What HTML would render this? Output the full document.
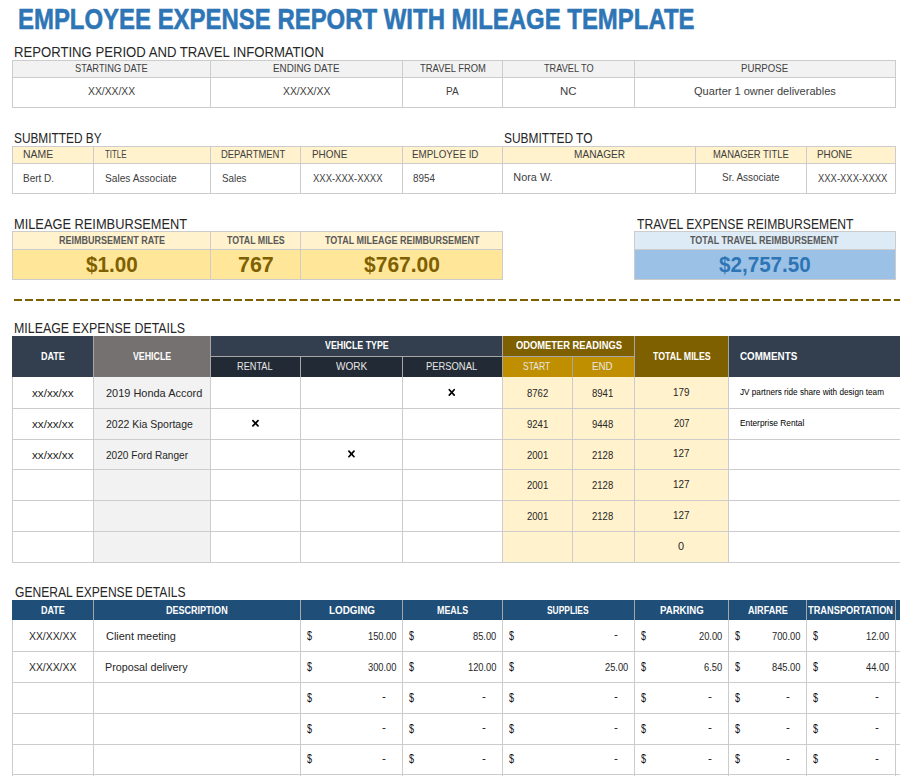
<!DOCTYPE html>
<html><head><meta charset="utf-8"><style>
html,body{margin:0;padding:0;background:#fff;width:900px;height:776px;overflow:hidden;position:relative;font-family:"Liberation Sans", sans-serif}
i{position:absolute;display:block}
b{position:absolute;white-space:nowrap;line-height:1;transform-origin:0 0;font-style:normal}
</style></head><body>
<i style="left:12px;top:60px;width:884px;height:17px;background:#f2f2f2"></i>
<i style="left:12px;top:60px;width:884px;height:1px;background:#cccccc"></i>
<i style="left:12px;top:77px;width:884px;height:1px;background:#cccccc"></i>
<i style="left:12px;top:107px;width:884px;height:1px;background:#cccccc"></i>
<i style="left:12px;top:60px;width:1px;height:48px;background:#cccccc"></i>
<i style="left:210px;top:60px;width:1px;height:48px;background:#cccccc"></i>
<i style="left:402px;top:60px;width:1px;height:48px;background:#cccccc"></i>
<i style="left:502px;top:60px;width:1px;height:48px;background:#cccccc"></i>
<i style="left:634px;top:60px;width:1px;height:48px;background:#cccccc"></i>
<i style="left:895px;top:60px;width:1px;height:48px;background:#cccccc"></i>
<i style="left:12px;top:146px;width:884px;height:17px;background:#fff2cc"></i>
<i style="left:12px;top:146px;width:884px;height:1px;background:#cccccc"></i>
<i style="left:12px;top:163px;width:884px;height:1px;background:#cccccc"></i>
<i style="left:12px;top:193px;width:884px;height:1px;background:#cccccc"></i>
<i style="left:12px;top:146px;width:1px;height:48px;background:#cccccc"></i>
<i style="left:93px;top:146px;width:1px;height:48px;background:#cccccc"></i>
<i style="left:210px;top:146px;width:1px;height:48px;background:#cccccc"></i>
<i style="left:300px;top:146px;width:1px;height:48px;background:#cccccc"></i>
<i style="left:402px;top:146px;width:1px;height:48px;background:#cccccc"></i>
<i style="left:502px;top:146px;width:1px;height:48px;background:#cccccc"></i>
<i style="left:695px;top:146px;width:1px;height:48px;background:#cccccc"></i>
<i style="left:806px;top:146px;width:1px;height:48px;background:#cccccc"></i>
<i style="left:895px;top:146px;width:1px;height:48px;background:#cccccc"></i>
<i style="left:12px;top:231px;width:490px;height:18px;background:#fff2cc"></i>
<i style="left:12px;top:249px;width:490px;height:30px;background:#ffe699"></i>
<i style="left:12px;top:231px;width:491px;height:1px;background:#cccccc"></i>
<i style="left:12px;top:249px;width:491px;height:1px;background:#cccccc"></i>
<i style="left:12px;top:279px;width:491px;height:1px;background:#cccccc"></i>
<i style="left:12px;top:231px;width:1px;height:49px;background:#cccccc"></i>
<i style="left:210px;top:231px;width:1px;height:49px;background:#cccccc"></i>
<i style="left:300px;top:231px;width:1px;height:49px;background:#cccccc"></i>
<i style="left:502px;top:231px;width:1px;height:49px;background:#cccccc"></i>
<i style="left:634px;top:231px;width:261px;height:18px;background:#ddebf7"></i>
<i style="left:634px;top:249px;width:261px;height:30px;background:#9bc2e6"></i>
<i style="left:634px;top:231px;width:262px;height:1px;background:#cccccc"></i>
<i style="left:634px;top:249px;width:262px;height:1px;background:#cccccc"></i>
<i style="left:634px;top:279px;width:262px;height:1px;background:#cccccc"></i>
<i style="left:634px;top:231px;width:1px;height:49px;background:#cccccc"></i>
<i style="left:895px;top:231px;width:1px;height:49px;background:#cccccc"></i>
<i style="left:12px;top:336px;width:81px;height:41px;background:#333f4f"></i>
<i style="left:93px;top:336px;width:117px;height:41px;background:#757171"></i>
<i style="left:210px;top:336px;width:292px;height:21px;background:#333f4f"></i>
<i style="left:210px;top:357px;width:292px;height:20px;background:#222b35"></i>
<i style="left:502px;top:336px;width:132px;height:21px;background:#7f6000"></i>
<i style="left:502px;top:357px;width:132px;height:20px;background:#bf8f00"></i>
<i style="left:634px;top:336px;width:94px;height:41px;background:#7f6000"></i>
<i style="left:728px;top:336px;width:172px;height:41px;background:#333f4f"></i>
<i style="left:93px;top:377px;width:117px;height:185px;background:#f2f2f2"></i>
<i style="left:502px;top:377px;width:226px;height:185px;background:#fff2cc"></i>
<i style="left:210px;top:356px;width:424px;height:1px;background:#a6a6a6"></i>
<i style="left:93px;top:336px;width:1px;height:41px;background:#a6a6a6"></i>
<i style="left:210px;top:336px;width:1px;height:41px;background:#a6a6a6"></i>
<i style="left:502px;top:336px;width:1px;height:41px;background:#a6a6a6"></i>
<i style="left:634px;top:336px;width:1px;height:41px;background:#a6a6a6"></i>
<i style="left:728px;top:336px;width:1px;height:41px;background:#a6a6a6"></i>
<i style="left:300px;top:357px;width:1px;height:20px;background:#a6a6a6"></i>
<i style="left:402px;top:357px;width:1px;height:20px;background:#a6a6a6"></i>
<i style="left:572px;top:357px;width:1px;height:20px;background:#a6a6a6"></i>
<i style="left:12px;top:408px;width:888px;height:1px;background:#cccccc"></i>
<i style="left:12px;top:439px;width:888px;height:1px;background:#cccccc"></i>
<i style="left:12px;top:469px;width:888px;height:1px;background:#cccccc"></i>
<i style="left:12px;top:500px;width:888px;height:1px;background:#cccccc"></i>
<i style="left:12px;top:531px;width:888px;height:1px;background:#cccccc"></i>
<i style="left:12px;top:562px;width:888px;height:1px;background:#cccccc"></i>
<i style="left:12px;top:377px;width:1px;height:186px;background:#cccccc"></i>
<i style="left:93px;top:377px;width:1px;height:186px;background:#cccccc"></i>
<i style="left:210px;top:377px;width:1px;height:186px;background:#cccccc"></i>
<i style="left:300px;top:377px;width:1px;height:186px;background:#cccccc"></i>
<i style="left:402px;top:377px;width:1px;height:186px;background:#cccccc"></i>
<i style="left:502px;top:377px;width:1px;height:186px;background:#cccccc"></i>
<i style="left:572px;top:377px;width:1px;height:186px;background:#cccccc"></i>
<i style="left:634px;top:377px;width:1px;height:186px;background:#cccccc"></i>
<i style="left:728px;top:377px;width:1px;height:186px;background:#cccccc"></i>
<i style="left:12px;top:600px;width:888px;height:20px;background:#1f4e78"></i>
<i style="left:93px;top:600px;width:1px;height:20px;background:#a6a6a6"></i>
<i style="left:300px;top:600px;width:1px;height:20px;background:#a6a6a6"></i>
<i style="left:402px;top:600px;width:1px;height:20px;background:#a6a6a6"></i>
<i style="left:502px;top:600px;width:1px;height:20px;background:#a6a6a6"></i>
<i style="left:634px;top:600px;width:1px;height:20px;background:#a6a6a6"></i>
<i style="left:728px;top:600px;width:1px;height:20px;background:#a6a6a6"></i>
<i style="left:806px;top:600px;width:1px;height:20px;background:#a6a6a6"></i>
<i style="left:895px;top:600px;width:1px;height:20px;background:#a6a6a6"></i>
<i style="left:12px;top:651px;width:888px;height:1px;background:#cccccc"></i>
<i style="left:12px;top:682px;width:888px;height:1px;background:#cccccc"></i>
<i style="left:12px;top:713px;width:888px;height:1px;background:#cccccc"></i>
<i style="left:12px;top:744px;width:888px;height:1px;background:#cccccc"></i>
<i style="left:12px;top:774px;width:888px;height:1px;background:#cccccc"></i>
<i style="left:12px;top:620px;width:1px;height:156px;background:#cccccc"></i>
<i style="left:93px;top:620px;width:1px;height:156px;background:#cccccc"></i>
<i style="left:300px;top:620px;width:1px;height:156px;background:#cccccc"></i>
<i style="left:402px;top:620px;width:1px;height:156px;background:#cccccc"></i>
<i style="left:502px;top:620px;width:1px;height:156px;background:#cccccc"></i>
<i style="left:634px;top:620px;width:1px;height:156px;background:#cccccc"></i>
<i style="left:728px;top:620px;width:1px;height:156px;background:#cccccc"></i>
<i style="left:806px;top:620px;width:1px;height:156px;background:#cccccc"></i>
<i style="left:895px;top:620px;width:1px;height:156px;background:#cccccc"></i>
<b style="left:18.08px;top:4px;font-size:29.50px;font-weight:700;color:#2e75b6;transform:scaleX(0.8114);-webkit-text-stroke:0.6px #2e75b6">EMPLOYEE EXPENSE REPORT WITH MILEAGE TEMPLATE</b>
<b style="left:14.10px;top:45px;font-size:14.65px;font-weight:400;color:#262626;transform:scaleX(0.8965);">REPORTING PERIOD AND TRAVEL INFORMATION</b>
<b style="left:75.00px;top:63px;font-size:10.90px;font-weight:400;color:#404040;transform:scaleX(0.8529);">STARTING DATE</b>
<b style="left:273.10px;top:63px;font-size:10.90px;font-weight:400;color:#404040;transform:scaleX(0.9028);">ENDING DATE</b>
<b style="left:420.00px;top:63px;font-size:10.90px;font-weight:400;color:#404040;transform:scaleX(0.8645);">TRAVEL FROM</b>
<b style="left:543.60px;top:63px;font-size:10.90px;font-weight:400;color:#404040;transform:scaleX(0.8424);">TRAVEL TO</b>
<b style="left:741.12px;top:63px;font-size:10.90px;font-weight:400;color:#404040;transform:scaleX(0.8846);">PURPOSE</b>
<b style="left:88.00px;top:86px;font-size:10.90px;font-weight:400;color:#404040;transform:scaleX(0.9490);">XX/XX/XX</b>
<b style="left:283.30px;top:86px;font-size:10.90px;font-weight:400;color:#404040;transform:scaleX(0.9531);">XX/XX/XX</b>
<b style="left:445.78px;top:86px;font-size:10.90px;font-weight:400;color:#404040;transform:scaleX(0.9231);">PA</b>
<b style="left:559.85px;top:86px;font-size:10.90px;font-weight:400;color:#404040;transform:scaleX(1.0500);">NC</b>
<b style="left:694.00px;top:86px;font-size:10.90px;font-weight:400;color:#404040;transform:scaleX(1.0143);">Quarter 1 owner deliverables</b>
<b style="left:13.59px;top:131px;font-size:14.65px;font-weight:400;color:#262626;transform:scaleX(0.8093);">SUBMITTED BY</b>
<b style="left:504.18px;top:131px;font-size:14.65px;font-weight:400;color:#262626;transform:scaleX(0.8159);">SUBMITTED TO</b>
<b style="left:23.04px;top:149px;font-size:10.90px;font-weight:400;color:#404040;transform:scaleX(0.9567);">NAME</b>
<b style="left:105.00px;top:149px;font-size:10.90px;font-weight:400;color:#404040;transform:scaleX(0.7233);">TITLE</b>
<b style="left:220.83px;top:149px;font-size:10.90px;font-weight:400;color:#404040;transform:scaleX(0.8671);">DEPARTMENT</b>
<b style="left:311.79px;top:149px;font-size:10.90px;font-weight:400;color:#404040;transform:scaleX(0.9105);">PHONE</b>
<b style="left:412.40px;top:149px;font-size:10.90px;font-weight:400;color:#404040;transform:scaleX(0.9000);">EMPLOYEE ID</b>
<b style="left:574.07px;top:149px;font-size:10.90px;font-weight:400;color:#404040;transform:scaleX(0.9259);">MANAGER</b>
<b style="left:713.43px;top:149px;font-size:10.90px;font-weight:400;color:#404040;transform:scaleX(0.8651);">MANAGER TITLE</b>
<b style="left:817.39px;top:149px;font-size:10.90px;font-weight:400;color:#404040;transform:scaleX(0.9053);">PHONE</b>
<b style="left:23.08px;top:173px;font-size:10.90px;font-weight:400;color:#404040;transform:scaleX(0.9156);">Bert D.</b>
<b style="left:105.00px;top:173px;font-size:10.90px;font-weight:400;color:#404040;transform:scaleX(0.9312);">Sales Associate</b>
<b style="left:221.70px;top:173px;font-size:10.90px;font-weight:400;color:#404040;transform:scaleX(0.9000);">Sales</b>
<b style="left:312.70px;top:173px;font-size:10.90px;font-weight:400;color:#404040;transform:scaleX(0.8700);">XXX-XXX-XXXX</b>
<b style="left:413.30px;top:173px;font-size:10.90px;font-weight:400;color:#404040;transform:scaleX(0.9042);">8954</b>
<b style="left:513.30px;top:172px;font-size:10.90px;font-weight:400;color:#404040;transform:scaleX(1.0000);">Nora W.</b>
<b style="left:722.30px;top:172px;font-size:10.90px;font-weight:400;color:#404040;transform:scaleX(0.9159);">Sr. Associate</b>
<b style="left:818.30px;top:173px;font-size:10.90px;font-weight:400;color:#404040;transform:scaleX(0.8675);">XXX-XXX-XXXX</b>
<b style="left:14.12px;top:217px;font-size:14.65px;font-weight:400;color:#262626;transform:scaleX(0.8756);">MILEAGE REIMBURSEMENT</b>
<b style="left:636.70px;top:217px;font-size:14.65px;font-weight:400;color:#262626;transform:scaleX(0.8287);">TRAVEL EXPENSE REIMBURSEMENT</b>
<b style="left:59.00px;top:235px;font-size:10.90px;font-weight:700;color:#595959;transform:scaleX(0.8281);">REIMBURSEMENT RATE</b>
<b style="left:227.30px;top:235px;font-size:10.90px;font-weight:700;color:#595959;transform:scaleX(0.8085);">TOTAL MILES</b>
<b style="left:325.00px;top:235px;font-size:10.90px;font-weight:700;color:#595959;transform:scaleX(0.8267);">TOTAL MILEAGE REIMBURSEMENT</b>
<b style="left:690.40px;top:235px;font-size:10.90px;font-weight:700;color:#595959;transform:scaleX(0.8256);">TOTAL TRAVEL REIMBURSEMENT</b>
<b style="left:86.00px;top:254px;font-size:22.05px;font-weight:700;color:#7f6000;transform:scaleX(0.9364);">$1.00</b>
<b style="left:237.73px;top:254px;font-size:22.05px;font-weight:700;color:#7f6000;transform:scaleX(0.9714);">767</b>
<b style="left:364.00px;top:254px;font-size:22.05px;font-weight:700;color:#7f6000;transform:scaleX(0.9532);">$767.00</b>
<b style="left:719.30px;top:254px;font-size:22.05px;font-weight:700;color:#2e75b6;transform:scaleX(0.9357);">$2,757.50</b>
<b style="left:14.15px;top:321px;font-size:14.65px;font-weight:400;color:#262626;transform:scaleX(0.8458);">MILEAGE EXPENSE DETAILS</b>
<b style="left:41.00px;top:351px;font-size:10.90px;font-weight:700;color:#ffffff;transform:scaleX(0.8276);">DATE</b>
<b style="left:132.70px;top:351px;font-size:10.90px;font-weight:700;color:#ffffff;transform:scaleX(0.8085);">VEHICLE</b>
<b style="left:325.00px;top:340px;font-size:10.90px;font-weight:700;color:#ffffff;transform:scaleX(0.8101);">VEHICLE TYPE</b>
<b style="left:516.00px;top:340px;font-size:10.90px;font-weight:700;color:#ffffff;transform:scaleX(0.8585);">ODOMETER READINGS</b>
<b style="left:652.60px;top:351px;font-size:10.90px;font-weight:700;color:#ffffff;transform:scaleX(0.8085);">TOTAL MILES</b>
<b style="left:740.20px;top:351px;font-size:10.90px;font-weight:700;color:#ffffff;transform:scaleX(0.9000);">COMMENTS</b>
<b style="left:236.86px;top:361px;font-size:10.90px;font-weight:400;color:#e7e6e6;transform:scaleX(0.8439);">RENTAL</b>
<b style="left:336.00px;top:361px;font-size:10.90px;font-weight:400;color:#e7e6e6;transform:scaleX(0.9206);">WORK</b>
<b style="left:426.44px;top:361px;font-size:10.90px;font-weight:400;color:#e7e6e6;transform:scaleX(0.8621);">PERSONAL</b>
<b style="left:523.30px;top:361px;font-size:10.90px;font-weight:400;color:#e7e6e6;transform:scaleX(0.7829);">START</b>
<b style="left:592.30px;top:361px;font-size:10.90px;font-weight:400;color:#e7e6e6;transform:scaleX(0.8955);">END</b>
<b style="left:31.70px;top:388px;font-size:11.80px;font-weight:400;color:#262626;transform:scaleX(0.9905);">xx/xx/xx</b>
<b style="left:105.70px;top:388px;font-size:10.90px;font-weight:400;color:#262626;transform:scaleX(1.0063);">2019 Honda Accord</b>
<b style="left:526.70px;top:388px;font-size:10.90px;font-weight:400;color:#262626;transform:scaleX(0.8750);">8762</b>
<b style="left:592.20px;top:388px;font-size:10.90px;font-weight:400;color:#262626;transform:scaleX(0.8750);">8941</b>
<b style="left:672.89px;top:387px;font-size:10.90px;font-weight:400;color:#262626;transform:scaleX(0.9059);">179</b>
<b style="left:31.70px;top:419px;font-size:11.80px;font-weight:400;color:#262626;transform:scaleX(0.9905);">xx/xx/xx</b>
<b style="left:105.70px;top:419px;font-size:10.90px;font-weight:400;color:#262626;transform:scaleX(0.9622);">2022 Kia Sportage</b>
<b style="left:526.70px;top:419px;font-size:10.90px;font-weight:400;color:#262626;transform:scaleX(0.8750);">9241</b>
<b style="left:592.20px;top:419px;font-size:10.90px;font-weight:400;color:#262626;transform:scaleX(0.8750);">9448</b>
<b style="left:673.80px;top:418px;font-size:10.90px;font-weight:400;color:#262626;transform:scaleX(0.8556);">207</b>
<b style="left:31.70px;top:450px;font-size:11.80px;font-weight:400;color:#262626;transform:scaleX(0.9905);">xx/xx/xx</b>
<b style="left:105.70px;top:450px;font-size:10.90px;font-weight:400;color:#262626;transform:scaleX(0.9281);">2020 Ford Ranger</b>
<b style="left:526.70px;top:450px;font-size:10.90px;font-weight:400;color:#262626;transform:scaleX(0.8750);">2001</b>
<b style="left:592.20px;top:450px;font-size:10.90px;font-weight:400;color:#262626;transform:scaleX(0.8750);">2128</b>
<b style="left:672.89px;top:448px;font-size:10.90px;font-weight:400;color:#262626;transform:scaleX(0.9059);">127</b>
<b style="left:526.70px;top:480px;font-size:10.90px;font-weight:400;color:#262626;transform:scaleX(0.8750);">2001</b>
<b style="left:592.20px;top:480px;font-size:10.90px;font-weight:400;color:#262626;transform:scaleX(0.8750);">2128</b>
<b style="left:672.89px;top:479px;font-size:10.90px;font-weight:400;color:#262626;transform:scaleX(0.9059);">127</b>
<b style="left:526.70px;top:511px;font-size:10.90px;font-weight:400;color:#262626;transform:scaleX(0.8750);">2001</b>
<b style="left:592.20px;top:511px;font-size:10.90px;font-weight:400;color:#262626;transform:scaleX(0.8750);">2128</b>
<b style="left:672.89px;top:510px;font-size:10.90px;font-weight:400;color:#262626;transform:scaleX(0.9059);">127</b>
<b style="left:678.00px;top:541px;font-size:10.90px;font-weight:400;color:#262626;transform:scaleX(1.0000);">0</b>
<b style="left:740.20px;top:387px;font-size:9.60px;font-weight:400;color:#000;transform:scaleX(0.8515);">JV partners ride share with design team</b>
<b style="left:740.20px;top:418px;font-size:9.60px;font-weight:400;color:#000;transform:scaleX(0.8676);">Enterprise Rental</b>
<b style="left:15.00px;top:585px;font-size:14.65px;font-weight:400;color:#262626;transform:scaleX(0.8252);">GENERAL EXPENSE DETAILS</b>
<b style="left:41.00px;top:605px;font-size:10.90px;font-weight:700;color:#ffffff;transform:scaleX(0.8276);">DATE</b>
<b style="left:166.00px;top:605px;font-size:10.90px;font-weight:700;color:#ffffff;transform:scaleX(0.8284);">DESCRIPTION</b>
<b style="left:329.00px;top:605px;font-size:10.90px;font-weight:700;color:#ffffff;transform:scaleX(0.9060);">LODGING</b>
<b style="left:437.30px;top:605px;font-size:10.90px;font-weight:700;color:#ffffff;transform:scaleX(0.8158);">MEALS</b>
<b style="left:547.30px;top:605px;font-size:10.90px;font-weight:700;color:#ffffff;transform:scaleX(0.7722);">SUPPLIES</b>
<b style="left:660.00px;top:605px;font-size:10.90px;font-weight:700;color:#ffffff;transform:scaleX(0.8837);">PARKING</b>
<b style="left:748.30px;top:605px;font-size:10.90px;font-weight:700;color:#ffffff;transform:scaleX(0.8333);">AIRFARE</b>
<b style="left:808.30px;top:605px;font-size:10.90px;font-weight:700;color:#ffffff;transform:scaleX(0.8500);">TRANSPORTATION</b>
<b style="left:29.30px;top:631px;font-size:10.90px;font-weight:400;color:#262626;transform:scaleX(0.9531);">XX/XX/XX</b>
<b style="left:105.70px;top:631px;font-size:10.90px;font-weight:400;color:#262626;transform:scaleX(1.0043);">Client meeting</b>
<b style="left:306.80px;top:630px;font-size:12.20px;font-weight:400;color:#111;transform:scaleX(0.7429);">$</b>
<b style="left:367.78px;top:631px;font-size:10.90px;font-weight:400;color:#262626;transform:scaleX(0.8550);">150.00</b>
<b style="left:408.80px;top:630px;font-size:12.20px;font-weight:400;color:#111;transform:scaleX(0.7429);">$</b>
<b style="left:472.92px;top:631px;font-size:10.90px;font-weight:400;color:#262626;transform:scaleX(0.8550);">85.00</b>
<b style="left:508.80px;top:630px;font-size:12.20px;font-weight:400;color:#111;transform:scaleX(0.7429);">$</b>
<b style="left:613.50px;top:629px;font-size:10.90px;font-weight:400;color:#111;transform:scaleX(1.0750);">-</b>
<b style="left:640.80px;top:630px;font-size:12.20px;font-weight:400;color:#111;transform:scaleX(0.7429);">$</b>
<b style="left:698.91px;top:631px;font-size:10.90px;font-weight:400;color:#262626;transform:scaleX(0.8550);">20.00</b>
<b style="left:734.80px;top:630px;font-size:12.20px;font-weight:400;color:#111;transform:scaleX(0.7429);">$</b>
<b style="left:771.78px;top:631px;font-size:10.90px;font-weight:400;color:#262626;transform:scaleX(0.8550);">700.00</b>
<b style="left:812.80px;top:630px;font-size:12.20px;font-weight:400;color:#111;transform:scaleX(0.7429);">$</b>
<b style="left:865.91px;top:631px;font-size:10.90px;font-weight:400;color:#262626;transform:scaleX(0.8550);">12.00</b>
<b style="left:29.30px;top:662px;font-size:10.90px;font-weight:400;color:#262626;transform:scaleX(0.9531);">XX/XX/XX</b>
<b style="left:104.71px;top:662px;font-size:10.90px;font-weight:400;color:#262626;transform:scaleX(0.9880);">Proposal delivery</b>
<b style="left:306.80px;top:661px;font-size:12.20px;font-weight:400;color:#111;transform:scaleX(0.7429);">$</b>
<b style="left:367.78px;top:662px;font-size:10.90px;font-weight:400;color:#262626;transform:scaleX(0.8550);">300.00</b>
<b style="left:408.80px;top:661px;font-size:12.20px;font-weight:400;color:#111;transform:scaleX(0.7429);">$</b>
<b style="left:467.78px;top:662px;font-size:10.90px;font-weight:400;color:#262626;transform:scaleX(0.8550);">120.00</b>
<b style="left:508.80px;top:661px;font-size:12.20px;font-weight:400;color:#111;transform:scaleX(0.7429);">$</b>
<b style="left:604.91px;top:662px;font-size:10.90px;font-weight:400;color:#262626;transform:scaleX(0.8550);">25.00</b>
<b style="left:640.80px;top:661px;font-size:12.20px;font-weight:400;color:#111;transform:scaleX(0.7429);">$</b>
<b style="left:704.04px;top:662px;font-size:10.90px;font-weight:400;color:#262626;transform:scaleX(0.8550);">6.50</b>
<b style="left:734.80px;top:661px;font-size:12.20px;font-weight:400;color:#111;transform:scaleX(0.7429);">$</b>
<b style="left:771.78px;top:662px;font-size:10.90px;font-weight:400;color:#262626;transform:scaleX(0.8550);">845.00</b>
<b style="left:812.80px;top:661px;font-size:12.20px;font-weight:400;color:#111;transform:scaleX(0.7429);">$</b>
<b style="left:865.91px;top:662px;font-size:10.90px;font-weight:400;color:#262626;transform:scaleX(0.8550);">44.00</b>
<b style="left:306.80px;top:692px;font-size:12.20px;font-weight:400;color:#111;transform:scaleX(0.7429);">$</b>
<b style="left:381.50px;top:691px;font-size:10.90px;font-weight:400;color:#111;transform:scaleX(1.0750);">-</b>
<b style="left:408.80px;top:692px;font-size:12.20px;font-weight:400;color:#111;transform:scaleX(0.7429);">$</b>
<b style="left:481.50px;top:691px;font-size:10.90px;font-weight:400;color:#111;transform:scaleX(1.0750);">-</b>
<b style="left:508.80px;top:692px;font-size:12.20px;font-weight:400;color:#111;transform:scaleX(0.7429);">$</b>
<b style="left:613.50px;top:691px;font-size:10.90px;font-weight:400;color:#111;transform:scaleX(1.0750);">-</b>
<b style="left:640.80px;top:692px;font-size:12.20px;font-weight:400;color:#111;transform:scaleX(0.7429);">$</b>
<b style="left:707.50px;top:691px;font-size:10.90px;font-weight:400;color:#111;transform:scaleX(1.0750);">-</b>
<b style="left:734.80px;top:692px;font-size:12.20px;font-weight:400;color:#111;transform:scaleX(0.7429);">$</b>
<b style="left:785.50px;top:691px;font-size:10.90px;font-weight:400;color:#111;transform:scaleX(1.0750);">-</b>
<b style="left:812.80px;top:692px;font-size:12.20px;font-weight:400;color:#111;transform:scaleX(0.7429);">$</b>
<b style="left:874.50px;top:691px;font-size:10.90px;font-weight:400;color:#111;transform:scaleX(1.0750);">-</b>
<b style="left:306.80px;top:723px;font-size:12.20px;font-weight:400;color:#111;transform:scaleX(0.7429);">$</b>
<b style="left:381.50px;top:722px;font-size:10.90px;font-weight:400;color:#111;transform:scaleX(1.0750);">-</b>
<b style="left:408.80px;top:723px;font-size:12.20px;font-weight:400;color:#111;transform:scaleX(0.7429);">$</b>
<b style="left:481.50px;top:722px;font-size:10.90px;font-weight:400;color:#111;transform:scaleX(1.0750);">-</b>
<b style="left:508.80px;top:723px;font-size:12.20px;font-weight:400;color:#111;transform:scaleX(0.7429);">$</b>
<b style="left:613.50px;top:722px;font-size:10.90px;font-weight:400;color:#111;transform:scaleX(1.0750);">-</b>
<b style="left:640.80px;top:723px;font-size:12.20px;font-weight:400;color:#111;transform:scaleX(0.7429);">$</b>
<b style="left:707.50px;top:722px;font-size:10.90px;font-weight:400;color:#111;transform:scaleX(1.0750);">-</b>
<b style="left:734.80px;top:723px;font-size:12.20px;font-weight:400;color:#111;transform:scaleX(0.7429);">$</b>
<b style="left:785.50px;top:722px;font-size:10.90px;font-weight:400;color:#111;transform:scaleX(1.0750);">-</b>
<b style="left:812.80px;top:723px;font-size:12.20px;font-weight:400;color:#111;transform:scaleX(0.7429);">$</b>
<b style="left:874.50px;top:722px;font-size:10.90px;font-weight:400;color:#111;transform:scaleX(1.0750);">-</b>
<b style="left:306.80px;top:753px;font-size:12.20px;font-weight:400;color:#111;transform:scaleX(0.7429);">$</b>
<b style="left:381.50px;top:753px;font-size:10.90px;font-weight:400;color:#111;transform:scaleX(1.0750);">-</b>
<b style="left:408.80px;top:753px;font-size:12.20px;font-weight:400;color:#111;transform:scaleX(0.7429);">$</b>
<b style="left:481.50px;top:753px;font-size:10.90px;font-weight:400;color:#111;transform:scaleX(1.0750);">-</b>
<b style="left:508.80px;top:753px;font-size:12.20px;font-weight:400;color:#111;transform:scaleX(0.7429);">$</b>
<b style="left:613.50px;top:753px;font-size:10.90px;font-weight:400;color:#111;transform:scaleX(1.0750);">-</b>
<b style="left:640.80px;top:753px;font-size:12.20px;font-weight:400;color:#111;transform:scaleX(0.7429);">$</b>
<b style="left:707.50px;top:753px;font-size:10.90px;font-weight:400;color:#111;transform:scaleX(1.0750);">-</b>
<b style="left:734.80px;top:753px;font-size:12.20px;font-weight:400;color:#111;transform:scaleX(0.7429);">$</b>
<b style="left:785.50px;top:753px;font-size:10.90px;font-weight:400;color:#111;transform:scaleX(1.0750);">-</b>
<b style="left:812.80px;top:753px;font-size:12.20px;font-weight:400;color:#111;transform:scaleX(0.7429);">$</b>
<b style="left:874.50px;top:753px;font-size:10.90px;font-weight:400;color:#111;transform:scaleX(1.0750);">-</b>
<svg style="position:absolute;left:0;top:0" width="900" height="776"><line x1="14" y1="300" x2="900" y2="300" stroke="#7f6000" stroke-width="2" stroke-dasharray="8 3"/><g stroke="#000" stroke-width="1.7" stroke-linecap="round"><line x1="449.29999999999995" y1="389.7" x2="454.20000000000005" y2="395.1"/><line x1="449.29999999999995" y1="395.1" x2="454.20000000000005" y2="389.7"/><line x1="252.9" y1="420.7" x2="258.0" y2="425.90000000000003"/><line x1="252.9" y1="425.90000000000003" x2="258.0" y2="420.7"/><line x1="348.9" y1="451.09999999999997" x2="354.0" y2="456.70000000000005"/><line x1="348.9" y1="456.70000000000005" x2="354.0" y2="451.09999999999997"/></g></svg>
</body></html>
